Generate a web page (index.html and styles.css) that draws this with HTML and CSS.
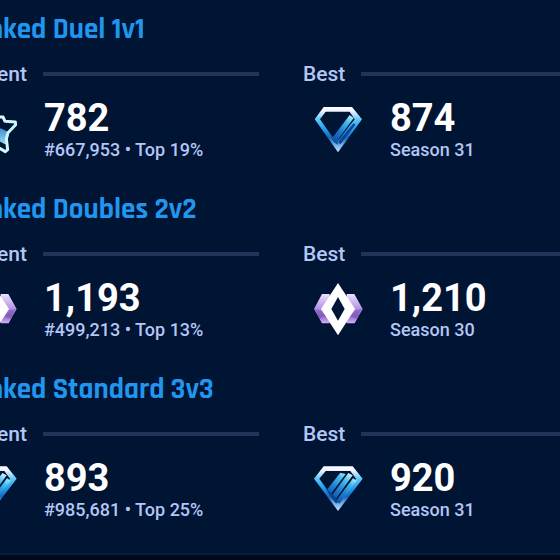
FILE: index.html
```html
<!DOCTYPE html>
<html lang="en">
<head>
<meta charset="utf-8">
<title>Ranked playlists</title>
<link rel="stylesheet" href="styles.css">
</head>
<body>
<svg class="sprite" aria-hidden="true">
  <defs>
    <linearGradient id="ice" x1="0" y1="0" x2="0" y2="1">
      <stop offset="0" stop-color="#ffffff"/>
      <stop offset=".1" stop-color="#eef0ff"/>
      <stop offset=".28" stop-color="#5cc6f8"/>
      <stop offset=".5" stop-color="#2299e8"/>
      <stop offset=".68" stop-color="#1766ba"/>
      <stop offset=".82" stop-color="#69a9e8"/>
      <stop offset="1" stop-color="#c3e6ff"/>
    </linearGradient>
    <linearGradient id="bar" gradientUnits="userSpaceOnUse" x1="140" y1="60" x2="85" y2="145">
      <stop offset="0" stop-color="#c8f0ff"/>
      <stop offset=".25" stop-color="#42bdf2"/>
      <stop offset=".6" stop-color="#1c78cc"/>
      <stop offset="1" stop-color="#0b4a9c"/>
    </linearGradient>
    <linearGradient id="wing" x1="0" y1="0" x2="0" y2="1">
      <stop offset="0" stop-color="#eee0ff"/>
      <stop offset=".45" stop-color="#b99ae8"/>
      <stop offset=".75" stop-color="#8d63c6"/>
      <stop offset="1" stop-color="#d6b5fa"/>
    </linearGradient>
    <linearGradient id="star-edge" x1="0" y1="0" x2="0" y2="1">
      <stop offset="0" stop-color="#ffffff"/>
      <stop offset=".5" stop-color="#c0f6fb"/>
      <stop offset="1" stop-color="#d3fcff"/>
    </linearGradient>
    <linearGradient id="star-band" x1="0" y1="0" x2="0" y2="1">
      <stop offset="0" stop-color="#3b8fd0"/>
      <stop offset="1" stop-color="#b8efff"/>
    </linearGradient>
  </defs>
  <symbol id="diamond-one" viewBox="0 0 198 198">
    <path fill="url(#ice)" fill-rule="evenodd" d="M56 36H141L171 73L99 172L29 73ZM62 50L45 73L84 128L96 140L149 73L134 50Z"/>
    <path fill="url(#bar)" d="M134 60L146 69L98 135L99 150L86 141L73 116L84 126Z"/>
    <path fill="#0b438f" d="M146 85L151 89L106 148L99 142Z"/>
  </symbol>
  <symbol id="diamond-three" viewBox="0 0 198 198">
    <path fill="url(#ice)" fill-rule="evenodd" d="M56 34H143L173 71L99 168L27 71ZM62 48L43 71L82 126L99 143L153 71L136 48Z"/>
    <path fill="url(#bar)" d="M106 53L122 57L76 119L65 105ZM130 54L143 61L92 133L80 122ZM144 70L155 77L103 146L93 137Z"/>
    <path fill="#0b438f" d="M60 95L75 110L88 124L99 137L94 146L75 124Z"/>
  </symbol>
  <symbol id="champion" viewBox="0 0 198 198">
    <path fill="url(#wing)" d="M51 57H74V145H51L27 102ZM125 57H148L173 102L149 145H125Z"/>
    <path fill="#7851ae" opacity=".5" d="M30 102L51 107L60 120L44 132ZM137 122L151 106L170 102L153 132Z"/>
    <path fill="#ffffff" fill-rule="evenodd" d="M99 24L150 102L99 181L48 102ZM99 66L79 102L99 137L119 102Z"/>
  </symbol>
  <symbol id="star" viewBox="0 0 198 198">
    <path fill="url(#star-band)" d="M52 118L75 122L99 124L125 100L150 112L145 145L138 148L124 140L99 148L60 162Z"/>
    <path fill="none" stroke="url(#star-edge)" stroke-width="9" stroke-linejoin="round" d="M99 25L112 66H132L138 79L169 81L170 89L147 113L142 131L146 164L139 170L99 147L61 170L53 166L55 113L28 89L29 81L60 79L76 66Z"/>
  </symbol>
</svg>

<main class="panel">
  <section class="playlist">
    <h2 class="title">Ranked Duel 1v1</h2>
    <div class="columns">
      <div class="stat">
        <h3 class="label">Current</h3>
        <div class="rating">
          <svg class="badge" aria-hidden="true"><use href="#star"/></svg>
          <div class="figures"><strong class="value">782</strong><span class="note">#667,953 • Top 19%</span></div>
        </div>
      </div>
      <div class="stat">
        <h3 class="label">Best</h3>
        <div class="rating">
          <svg class="badge" aria-hidden="true"><use href="#diamond-one"/></svg>
          <div class="figures"><strong class="value">874</strong><span class="note">Season 31</span></div>
        </div>
      </div>
    </div>
  </section>

  <section class="playlist">
    <h2 class="title">Ranked Doubles 2v2</h2>
    <div class="columns">
      <div class="stat">
        <h3 class="label">Current</h3>
        <div class="rating">
          <svg class="badge" aria-hidden="true"><use href="#champion"/></svg>
          <div class="figures"><strong class="value">1,193</strong><span class="note">#499,213 • Top 13%</span></div>
        </div>
      </div>
      <div class="stat">
        <h3 class="label">Best</h3>
        <div class="rating">
          <svg class="badge" aria-hidden="true"><use href="#champion"/></svg>
          <div class="figures"><strong class="value">1,210</strong><span class="note">Season 30</span></div>
        </div>
      </div>
    </div>
  </section>

  <section class="playlist">
    <h2 class="title">Ranked Standard 3v3</h2>
    <div class="columns">
      <div class="stat">
        <h3 class="label">Current</h3>
        <div class="rating">
          <svg class="badge" aria-hidden="true"><use href="#diamond-three"/></svg>
          <div class="figures"><strong class="value">893</strong><span class="note">#985,681 • Top 25%</span></div>
        </div>
      </div>
      <div class="stat">
        <h3 class="label">Best</h3>
        <div class="rating">
          <svg class="badge" aria-hidden="true"><use href="#diamond-three"/></svg>
          <div class="figures"><strong class="value">920</strong><span class="note">Season 31</span></div>
        </div>
      </div>
    </div>
  </section>
</main>
</body>
</html>
```
FILE: styles.css
```css
* {
  box-sizing: border-box;
}

body {
  margin: 0;
  overflow: hidden;
  background: #010817;
  color: #b4c6f5;
  font-family: Roboto, "Liberation Sans", sans-serif;
  font-weight: 500;
}

.sprite {
  position: absolute;
  width: 0;
  height: 0;
}

/* The panel is wider than the window and bleeds off both sides. */
.panel {
  margin: 0 -45px 0 -43px;
  padding-bottom: 13px;
  border-bottom: 2px solid #071b44;
  background: #001433;
}

.playlist {
  padding: 14px 0 18px;
}

.title {
  margin: 0 0 15px;
  color: #2196ee;
  font-family: Rajdhani, Roboto, sans-serif;
  font-size: 29px;
  font-weight: 700;
  line-height: 32px;
}

.columns {
  display: grid;
  grid-template-columns: 1fr 1fr;
  gap: 44px;
}

.label {
  display: flex;
  align-items: center;
  gap: 16px;
  margin: 0 0 8px;
  font-size: 21px;
  font-weight: 500;
  line-height: 26px;
}

.label::after {
  flex: 1;
  height: 4px;
  background: #22345a;
  content: "";
}

.rating {
  display: flex;
  align-items: flex-start;
  gap: 19px;
}

.badge {
  flex: none;
  width: 66px;
  height: 66px;
  margin-left: 2px;
}

.figures {
  display: flex;
  flex-direction: column;
  padding-top: 3px;
}

.value {
  color: #fff;
  font-size: 38px;
  font-weight: 700;
  line-height: 40px;
}

.note {
  font-size: 18px;
  line-height: 24px;
}
```
